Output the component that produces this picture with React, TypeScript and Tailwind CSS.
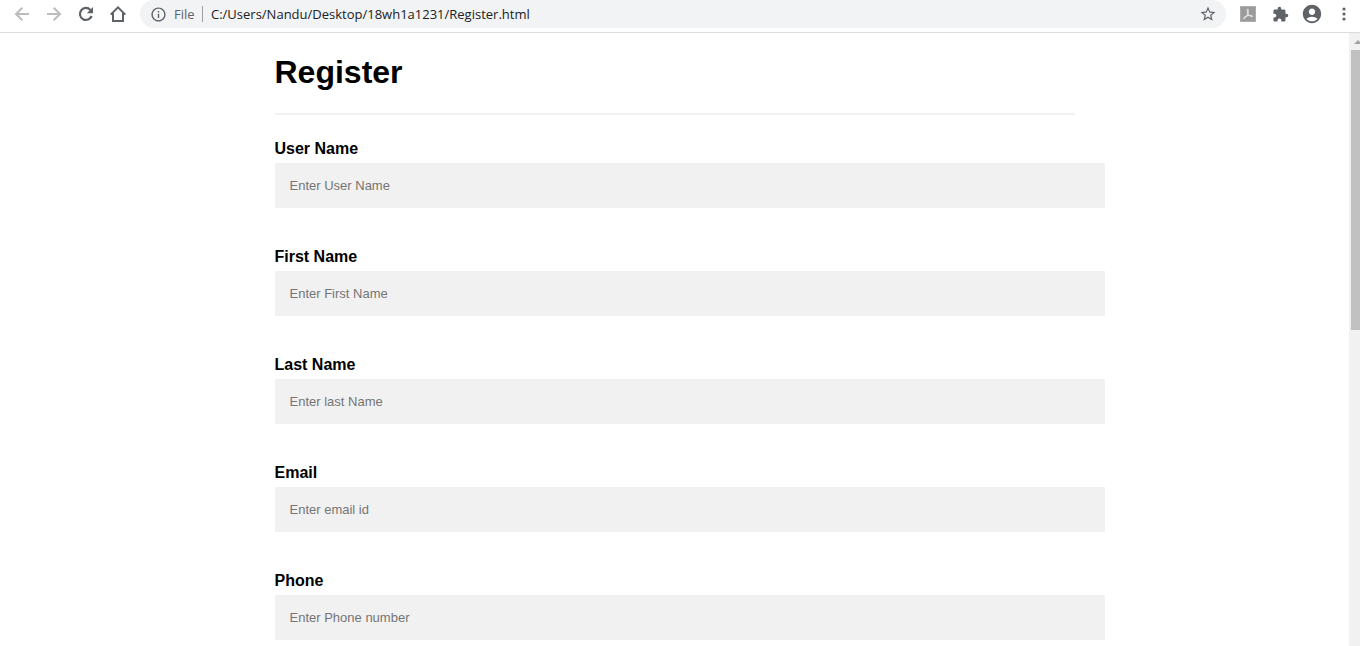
import { MdAccountCircle, MdExtension, MdInfoOutline, MdStarBorder } from "react-icons/md";

const fields = [
  { id: "username", label: "User Name", placeholder: "Enter User Name", type: "text" },
  { id: "firstname", label: "First Name", placeholder: "Enter First Name", type: "text" },
  { id: "lastname", label: "Last Name", placeholder: "Enter last Name", type: "text" },
  { id: "email", label: "Email", placeholder: "Enter email id", type: "text" },
  { id: "phone", label: "Phone", placeholder: "Enter Phone number", type: "text" },
];

function BackIcon() {
  return (
    <svg width="16" height="16" viewBox="0 0 16 16" fill="none" stroke="currentColor" strokeWidth="2" aria-hidden="true">
      <path d="M15 8H2.500M8.300 1.700 2 8l6.300 6.300" />
    </svg>
  );
}

function ForwardIcon() {
  return (
    <svg width="16" height="16" viewBox="0 0 16 16" fill="none" stroke="currentColor" strokeWidth="2" aria-hidden="true">
      <path d="M1 8h12.500M7.700 1.700 14 8l-6.300 6.300" />
    </svg>
  );
}

function ReloadIcon() {
  return (
    <svg width="16" height="16" viewBox="0 0 16 16" aria-hidden="true">
      <path d="M13.600 10A6 6 0 1 1 12.400 3.900" fill="none" stroke="currentColor" strokeWidth="2.200" />
      <path d="M15 1v6.200H8.800z" fill="currentColor" />
    </svg>
  );
}

function HomeIcon() {
  return (
    <svg width="18" height="18" viewBox="0 0 18 18" fill="none" stroke="currentColor" strokeWidth="2" aria-hidden="true">
      <path d="M1.700 9.600 9 2.300l7.300 7.300M4 8v8h10V8" strokeLinejoin="miter" />
    </svg>
  );
}

function MenuIcon() {
  return (
    <svg width="4" height="14" viewBox="0 0 4 14" fill="currentColor" aria-hidden="true">
      <circle cx="2" cy="2" r="1.600" />
      <circle cx="2" cy="7" r="1.600" />
      <circle cx="2" cy="12" r="1.600" />
    </svg>
  );
}

function PdfIcon() {
  return (
    <svg width="16" height="16" viewBox="0 0 16 16" aria-hidden="true">
      <rect width="16" height="16" fill="#9b9b9b" />
      <rect x="0.5" y="0.5" width="15" height="15" fill="none" stroke="#adadad" />
      <path d="M7.400 3.200c1.200-.4 1 2.200.5 3.900C7.200 9.400 5 13 3.700 12.800c-1.300-.4 1-2.300 3.100-2.900 2.200-.6 5.600-.9 5.800.3.100 1.100-2.500.3-3.700-1.200C7.600 7.500 6.600 3.600 7.400 3.200z" fill="none" stroke="#ececec" strokeWidth="1" />
    </svg>
  );
}

function BrowserBar() {
  return (
    <header className="flex h-[33px] items-start border-b border-[#dadce0] bg-white pr-1.5 pl-3 font-['Open_Sans','Noto_Sans',sans-serif] text-[#5f6368]">
      <nav className="flex h-7 items-center gap-3">
        <button type="button" aria-label="Back" className="flex size-5 items-center justify-center text-[#babcbe]">
          <BackIcon />
        </button>
        <button type="button" aria-label="Forward" className="flex size-5 items-center justify-center text-[#babcbe]">
          <ForwardIcon />
        </button>
        <button type="button" aria-label="Reload" className="flex size-5 items-center justify-center">
          <ReloadIcon />
        </button>
        <button type="button" aria-label="Home" className="flex size-5 items-center justify-center">
          <HomeIcon />
        </button>
      </nav>
      <div className="ml-3 flex h-7 min-w-0 flex-1 items-center rounded-full bg-[#f1f3f4] px-2 text-[13px]">
        <button type="button" aria-label="Site information" className="flex size-5 items-center justify-center">
          <MdInfoOutline size={17} />
        </button>
        <span className="ml-1.5 w-7 leading-5">File</span>
        <span className="h-4 w-px bg-[#9aa0a6]" />
        <input
          type="text"
          aria-label="Address"
          defaultValue="C:/Users/Nandu/Desktop/18wh1a1231/Register.html"
          className="ml-2 min-w-0 flex-1 bg-transparent leading-5 text-[#202124] outline-none"
        />
        <button type="button" aria-label="Bookmark" className="flex size-5 items-center justify-center">
          <MdStarBorder size={18} />
        </button>
      </div>
      <div className="ml-3 flex h-7 items-center gap-3">
        <button type="button" aria-label="PDF" className="flex size-5 items-center justify-center">
          <PdfIcon />
        </button>
        <button type="button" aria-label="Extensions" className="flex size-5 items-center justify-center">
          <MdExtension size={17} />
        </button>
        <button type="button" aria-label="Profile" className="flex size-5 items-center justify-center">
          <MdAccountCircle size={22} className="shrink-0" />
        </button>
        <button type="button" aria-label="Menu" className="flex size-5 items-center justify-center">
          <MenuIcon />
        </button>
      </div>
    </header>
  );
}

function ScrollTrack() {
  return (
    <div className="flex w-[11px] shrink-0 flex-col items-end overflow-hidden bg-[#f1f1f1]" aria-hidden="true">
      <div className="flex h-[17px] w-full items-center justify-end">
        <svg width="6" height="4" viewBox="0 0 6 4">
          <path d="M0 4 4 0l2 2v2z" fill="#a3a3a3" />
        </svg>
      </div>
      <div className="h-[280px] w-[9px] bg-[#c1c1c1]" />
    </div>
  );
}

export default function App() {
  return (
    <div className="flex min-h-screen flex-col bg-white">
      <BrowserBar />
      <div className="flex flex-1">
        <main className="min-w-0 flex-1 font-['Liberation_Sans',Arial,sans-serif] text-black">
          <form className="mx-auto w-full max-w-[800px] pt-5">
            <h1 className="text-[32px] leading-[38px] font-bold">Register</h1>
            <hr className="mt-[22px] mb-6 border-t-2 border-[#f1f1f1]" />
            <div className="flex flex-col gap-[39px]">
              {fields.map((field) => (
                <div key={field.id} className="flex flex-col gap-1">
                  <label htmlFor={field.id} className="text-base leading-5 font-bold">
                    {field.label}
                  </label>
                  <input
                    id={field.id}
                    name={field.id}
                    type={field.type}
                    placeholder={field.placeholder}
                    className="h-[45px] w-[calc(100%+30px)] bg-[#f1f1f1] px-[15px] text-[13px] outline-none placeholder:text-[#757575] focus:bg-[#dddddd]"
                  />
                </div>
              ))}
            </div>
          </form>
        </main>
        <ScrollTrack />
      </div>
    </div>
  );
}
